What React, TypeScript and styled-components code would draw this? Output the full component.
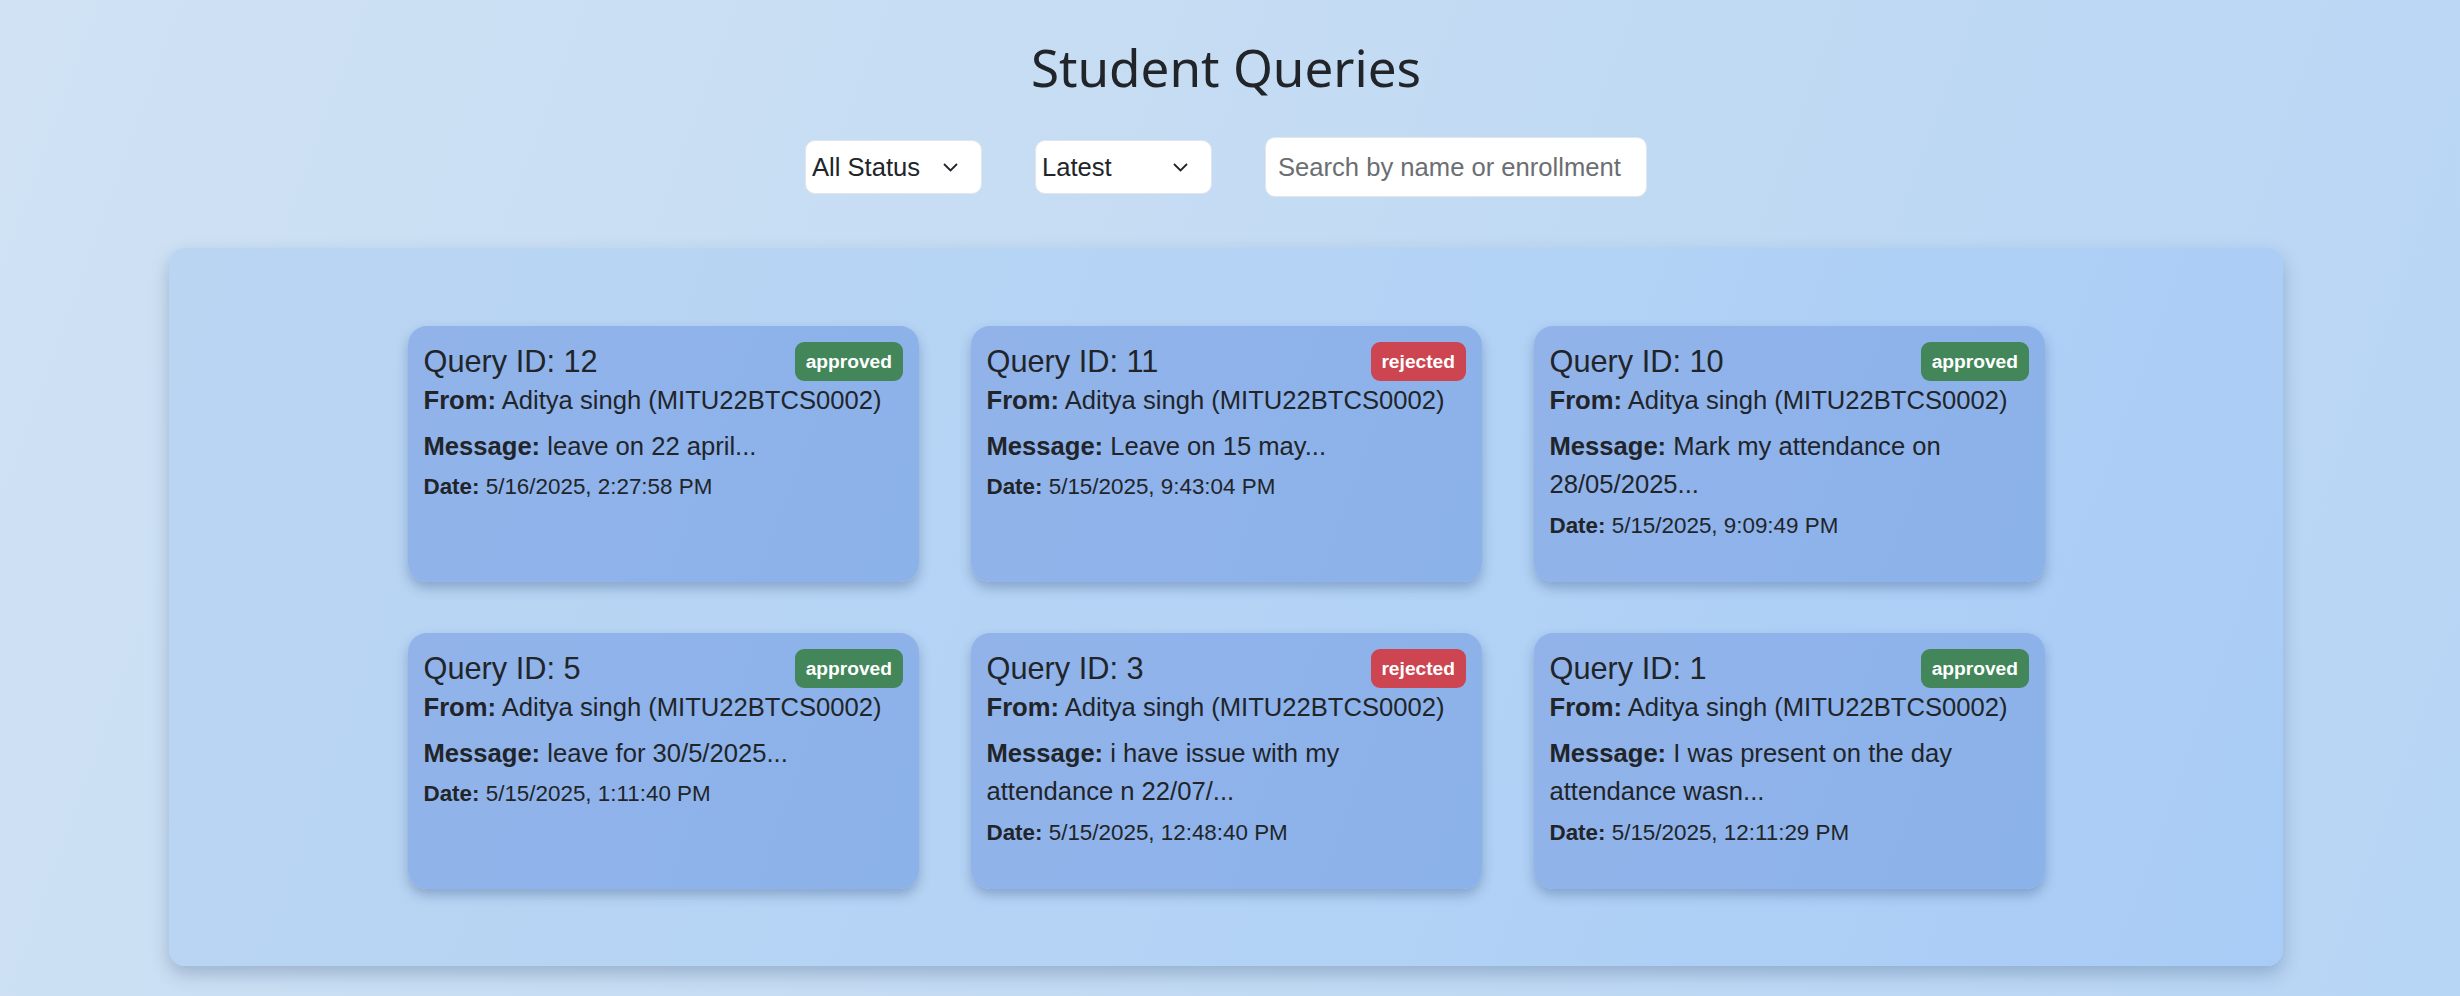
import React from "react";
import styled, { createGlobalStyle } from "styled-components";

const GlobalStyle = createGlobalStyle`
  html, body {
    margin: 0;
    padding: 0;
  }
  body {
    background: linear-gradient(110deg, #d0e2f4 0%, #c3dbf3 50%, #b7d5f5 100%);
    min-height: 996px;
    font-family: "Liberation Sans", Arial, sans-serif;
    color: #212529;
    overflow: hidden;
  }
`;

const Page = styled.div`
  padding: 0 8px 0 0;
  display: flex;
  flex-direction: column;
  align-items: stretch;
`;

const Title = styled.h1`
  margin: 36.7px 0 0;
  text-align: center;
  font-family: "Noto Sans", "Open Sans", sans-serif;
  font-weight: 400;
  font-size: 51.2px;
  line-height: 1.2;
  color: #212529;
`;

const Filters = styled.div`
  display: flex;
  justify-content: center;
  align-items: center;
  gap: 53px;
  margin-top: 39px;
  height: 60px;
`;

const chevron =
  "url(\"data:image/svg+xml;utf8,<svg xmlns='http://www.w3.org/2000/svg' width='15' height='9' viewBox='0 0 15 9'><path d='M1 1 L7.5 7.5 L14 1' fill='none' stroke='%23212529' stroke-width='1.8'/></svg>\")";

const Select = styled.select`
  appearance: none;
  -webkit-appearance: none;
  width: 177px;
  height: 54px;
  box-sizing: border-box;
  padding: 0 40px 0 6px;
  border: 1px solid #e1e6ec;
  border-radius: 10px;
  background-color: #ffffff;
  background-image: ${chevron};
  background-repeat: no-repeat;
  background-position: right 23px center;
  font-family: "Liberation Sans", Arial, sans-serif;
  font-size: 25.6px;
  color: #212529;
  outline: none;
`;

const Search = styled.input`
  width: 382px;
  height: 60px;
  box-sizing: border-box;
  padding: 0 12px;
  border: 1px solid #e1e6ec;
  border-radius: 10px;
  background: #ffffff;
  font-family: "Liberation Sans", Arial, sans-serif;
  font-size: 25.6px;
  color: #212529;
  outline: none;
  &::placeholder {
    color: #6b6e72;
  }
`;

const Panel = styled.section`
  margin: 51px 169px 30px;
  padding: 78px 0 77px;
  border-radius: 16px;
  background: linear-gradient(110deg, #bad5f2 0%, #b4d3f5 50%, #a9ccf6 100%);
  box-shadow: 0 8px 18px rgba(40, 70, 110, 0.28);
`;

const Grid = styled.div`
  display: grid;
  grid-template-columns: repeat(3, 511px);
  column-gap: 52px;
  row-gap: 51px;
  justify-content: center;
`;

const Card = styled.article`
  height: 256px;
  box-sizing: border-box;
  padding: 16px 16px;
  border-radius: 19px;
  background: linear-gradient(110deg, #91b3ea 0%, #8cb2ea 100%);
  box-shadow: 0 6px 12px rgba(30, 60, 110, 0.3);
`;

const CardHeader = styled.div`
  display: flex;
  justify-content: space-between;
  align-items: center;
  height: 39px;
`;

const QueryTitle = styled.h3`
  margin: 0;
  font-weight: 400;
  font-size: 30.72px;
  line-height: normal;
  color: #212529;
`;

const Badge = styled.span<{ $status: "approved" | "rejected" }>`
  display: inline-flex;
  align-items: center;
  height: 39px;
  padding: 0 10.5px;
  border-radius: 9px;
  font-size: 19.2px;
  font-weight: 700;
  color: #ffffff;
  background: ${(p) => (p.$status === "approved" ? "#42865a" : "#cc4550")};
`;

const Line = styled.p<{ $small?: boolean; $gap?: number }>`
  margin: ${(p) => (p.$gap ?? 0)}px 0 0;
  font-size: ${(p) => (p.$small ? "22.4px" : "25.6px")};
  line-height: 1.5;
  color: #212529;
  strong {
    font-weight: 700;
  }
`;

type Query = {
  id: number;
  status: "approved" | "rejected";
  message: string;
  date: string;
};

const queries: Query[] = [
  { id: 12, status: "approved", message: "leave on 22 april...", date: "5/16/2025, 2:27:58 PM" },
  { id: 11, status: "rejected", message: "Leave on 15 may...", date: "5/15/2025, 9:43:04 PM" },
  { id: 10, status: "approved", message: "Mark my attendance on 28/05/2025...", date: "5/15/2025, 9:09:49 PM" },
  { id: 5, status: "approved", message: "leave for 30/5/2025...", date: "5/15/2025, 1:11:40 PM" },
  { id: 3, status: "rejected", message: "i have issue with my attendance n 22/07/...", date: "5/15/2025, 12:48:40 PM" },
  { id: 1, status: "approved", message: "I was present on the day attendance wasn...", date: "5/15/2025, 12:11:29 PM" },
];

export default function App() {
  return (
    <>
      <GlobalStyle />
      <Page>
        <Title>Student Queries</Title>
        <Filters>
          <Select defaultValue="all">
            <option value="all">All Status</option>
            <option value="pending">Pending</option>
            <option value="approved">Approved</option>
            <option value="rejected">Rejected</option>
          </Select>
          <Select defaultValue="latest">
            <option value="latest">Latest</option>
            <option value="oldest">Oldest</option>
          </Select>
          <Search placeholder="Search by name or enrollment" />
        </Filters>
        <Panel>
          <Grid>
            {queries.map((q) => (
              <Card key={q.id}>
                <CardHeader>
                  <QueryTitle>Query ID: {q.id}</QueryTitle>
                  <Badge $status={q.status}>{q.status}</Badge>
                </CardHeader>
                <Line>
                  <strong>From:</strong> Aditya singh (MITU22BTCS0002)
                </Line>
                <Line $gap={7.5}>
                  <strong>Message:</strong> {q.message}
                </Line>
                <Line $small $gap={5}>
                  <strong>Date:</strong> {q.date}
                </Line>
              </Card>
            ))}
          </Grid>
        </Panel>
      </Page>
    </>
  );
}
